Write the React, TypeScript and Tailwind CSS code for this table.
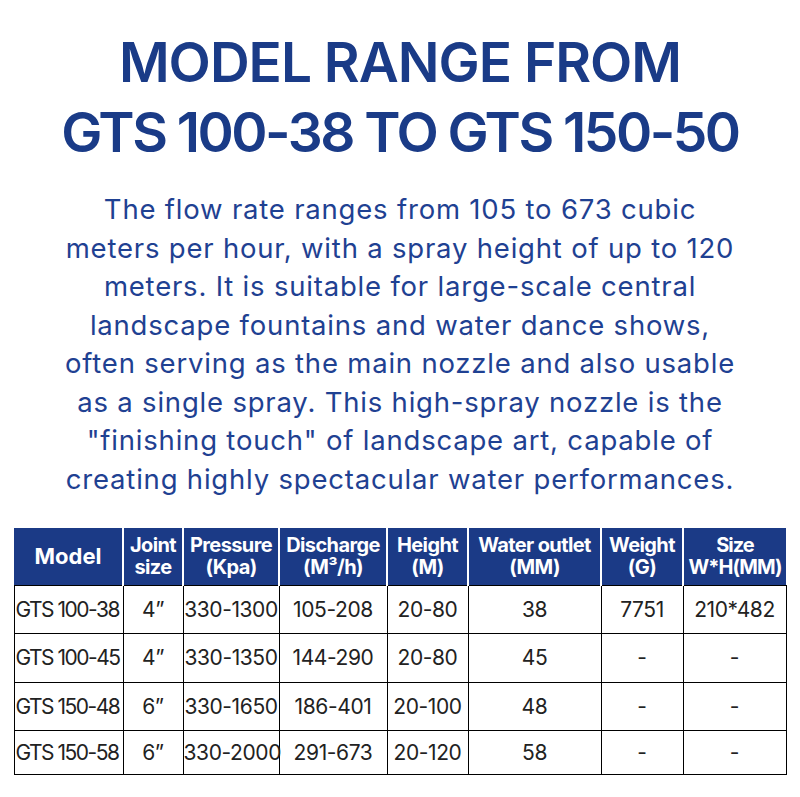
import React from "react";

const rows = [
  ["GTS 100-38", "4\u201D", "330-1300", "105-208", "20-80", "38", "7751", "210*482"],
  ["GTS 100-45", "4\u201D", "330-1350", "144-290", "20-80", "45", "-", "-"],
  ["GTS 150-48", "6\u201D", "330-1650", "186-401", "20-100", "48", "-", "-"],
  ["GTS 150-58", "6\u201D", "330-2000", "291-673", "20-120", "58", "-", "-"],
];

const lines = [
  "The flow rate ranges from 105 to 673 cubic",
  "meters per hour, with a spray height of up to 120",
  "meters. It is suitable for large-scale central",
  "landscape fountains and water dance shows,",
  "often serving as the main nozzle and also usable",
  "as a single spray. This high-spray nozzle is the",
  "\"finishing touch\" of landscape art, capable of",
  "creating highly spectacular water performances.",
];

export default function App() {
  return (
    <div
      className="w-[800px] h-[797px] bg-white flex flex-col items-center overflow-hidden"
      style={{ fontFamily: "Inter, sans-serif" }}
    >
      <h1 className="mt-[27px] flex flex-col items-center text-[#1a3b87] font-semibold text-[55px] leading-[70px]">
        <span className="tracking-[-1px]">MODEL RANGE FROM</span>
        <span className="tracking-[-2.5px]">GTS 100-38 TO GTS 150-50</span>
      </h1>
      <div className="mt-[23px] text-center text-[#1f4192] text-[27.5px] leading-[38.5px] tracking-[0.8px]">
        {lines.map((l) => (
          <div key={l}>{l}</div>
        ))}
      </div>
      <table className="mt-[30px] w-[772px] border-collapse table-fixed text-center">
        <colgroup>
          <col className="w-[109px]" />
          <col className="w-[60px]" />
          <col className="w-[96px]" />
          <col className="w-[108px]" />
          <col className="w-[81px]" />
          <col className="w-[133px]" />
          <col className="w-[82px]" />
          <col className="w-[103px]" />
        </colgroup>
        <thead>
          <tr className="h-[57px] bg-[#1b3a86] text-white text-[20px] leading-[22px] font-semibold tracking-[-0.6px]">
            <th className="border-r-2 border-white text-[22px] tracking-normal">Model</th>
            <th className="border-r-2 border-white">Joint<br />size</th>
            <th className="border-r-2 border-white">Pressure<br />(Kpa)</th>
            <th className="border-r-2 border-white">Discharge<br />(M³/h)</th>
            <th className="border-r-2 border-white">Height<br />(M)</th>
            <th className="border-r-2 border-white">Water outlet<br />(MM)</th>
            <th className="border-r-2 border-white">Weight<br />(G)</th>
            <th className="tracking-[-1px]">Size<br />W*H(MM)</th>
          </tr>
        </thead>
        <tbody>
          {rows.map((r, i) => (
            <tr key={i} className={i === 3 ? "h-[44px]" : "h-[48.5px]"}>
              {r.map((c, j) => (
                <td
                  key={j}
                  className={
                    "border-[1.5px] border-black text-[#222] whitespace-nowrap " +
                    (j === 0
                      ? "text-left pl-[1px] text-[21px] tracking-[-1.5px]"
                      : "text-[21px] tracking-[-0.4px]")
                  }
                >
                  {c}
                </td>
              ))}
            </tr>
          ))}
        </tbody>
      </table>
    </div>
  );
}
